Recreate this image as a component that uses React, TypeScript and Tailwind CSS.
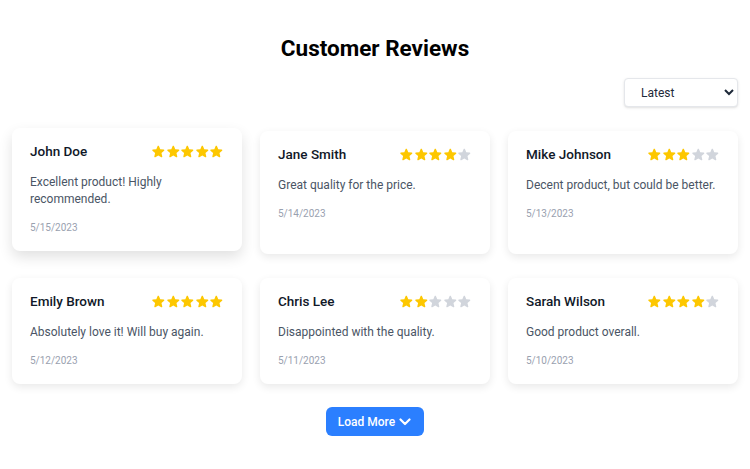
type Review = { name: string; rating: number; text: string; date: string };

const reviews: Review[] = [
  { name: "John Doe", rating: 5, text: "Excellent product! Highly recommended.", date: "5/15/2023" },
  { name: "Jane Smith", rating: 4, text: "Great quality for the price.", date: "5/14/2023" },
  { name: "Mike Johnson", rating: 3, text: "Decent product, but could be better.", date: "5/13/2023" },
  { name: "Emily Brown", rating: 5, text: "Absolutely love it! Will buy again.", date: "5/12/2023" },
  { name: "Chris Lee", rating: 2, text: "Disappointed with the quality.", date: "5/11/2023" },
  { name: "Sarah Wilson", rating: 4, text: "Good product overall.", date: "5/10/2023" },
];

function Star({ filled }: { filled: boolean }) {
  return (
    <svg viewBox="0 0 20 20" className={`w-[14.6px] h-[14.6px] ${filled ? "fill-yellow-400" : "fill-gray-300"}`}>
      <path d="M10.868 2.884c-.321-.772-1.415-.772-1.736 0l-1.83 4.401-4.753.381c-.833.067-1.171 1.107-.536 1.651l3.62 3.102-1.106 4.637c-.194.813.691 1.456 1.405 1.02L10 15.591l4.069 2.485c.713.436 1.598-.207 1.404-1.02l-1.106-4.637 3.62-3.102c.635-.544.297-1.584-.536-1.65l-4.752-.382-1.831-4.401z" />
    </svg>
  );
}

function ReviewCard({ review, raised }: { review: Review; raised?: boolean }) {
  return (
    <div
      className={`bg-white rounded-lg px-[18px] pt-[14px] pb-4 ${
        raised ? "-translate-y-[3px] shadow-[0_6px_14px_rgba(0,0,0,0.12)]" : "shadow-[0_3px_8px_rgba(0,0,0,0.09)]"
      }`}
    >
      <div className="flex items-center justify-between">
        <h3 className="text-[13.5px] leading-[18px] font-medium text-gray-900">{review.name}</h3>
        <div className="flex">
          {[1, 2, 3, 4, 5].map((i) => (
            <Star key={i} filled={i <= review.rating} />
          ))}
        </div>
      </div>
      <p className="mt-[14px] text-[12px] leading-[17px] text-gray-600">{review.text}</p>
      <p className="mt-3 text-[10px] leading-[15px] text-gray-400">{review.date}</p>
    </div>
  );
}

export default function App() {
  return (
    <div className="min-h-screen bg-white px-3 pt-8 pb-8 font-['Roboto',sans-serif]">
      <h1 className="text-center text-[22.5px] leading-8 font-bold text-black mb-3.5">Customer Reviews</h1>
      <div className="flex justify-end mb-6">
        <select className="w-[114px] h-[29px] rounded border border-gray-200 bg-white pl-3 pr-1 text-[12px] text-gray-800 shadow-sm">
          <option>Latest</option>
          <option>Highest Rated</option>
          <option>Lowest Rated</option>
        </select>
      </div>
      <div className="grid grid-cols-3 gap-x-[18px] gap-y-6">
        {reviews.map((r, i) => (
          <ReviewCard key={r.name} review={r} raised={i === 0} />
        ))}
      </div>
      <div className="flex justify-center mt-[23px]">
        <button className="flex items-center h-[29px] pl-3 pr-[13px] rounded-md bg-blue-500 text-white text-[12px] font-medium">
          Load More
          <svg viewBox="0 0 12 8" className="ml-[4px] w-3 h-2" fill="none" stroke="currentColor" strokeWidth={2.2} strokeLinecap="round" strokeLinejoin="round">
            <path d="M1.5 1.5 6 6l4.5-4.5" />
          </svg>
        </button>
      </div>
    </div>
  );
}
